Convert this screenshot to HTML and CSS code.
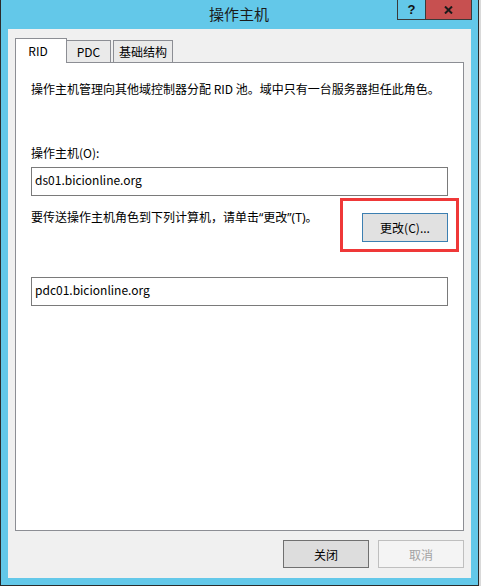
FILE: index.html
```html
<!DOCTYPE html>
<html>
<head>
    <meta charset="utf-8">
    <link rel="stylesheet" href="styles.css">
</head>
<body>
    <div class="window">
        <div class="titlebar">
            <div class="title">操作主机</div>
            <div class="caption-btns">
                <div class="cap-btn help-btn">?</div>
                <div class="cap-btn close-btn">
                    <svg width="9" height="8" viewBox="0 0 9 8">
                        <path d="M1 0.5 L8 7.5 M8 0.5 L1 7.5" stroke="#1a1a1a" stroke-width="2" fill="none"/>
                    </svg>
                </div>
            </div>
        </div>
        <div class="client">
            <div class="tabs">
                <div class="tab tab-active">RID</div>
                <div class="tab tab-pdc">PDC</div>
                <div class="tab tab-infra">基础结构</div>
            </div>
            <div class="tab-panel">
                <p class="intro">操作主机管理向其他域控制器分配 RID 池。域中只有一台服务器担任此角色。</p>
                <div class="label">操作主机(O):</div>
                <div class="textbox">ds01.bicionline.org</div>
                <div class="transfer-row">
                    <span class="transfer-text">要传送操作主机角色到下列计算机，请单击“更改”(T)。</span>
                    <button class="btn btn-change">更改(C)...</button>
                </div>
                <div class="textbox target">pdc01.bicionline.org</div>
                <div class="highlight"></div>
            </div>
            <div class="footer">
                <button class="btn btn-close">关闭</button>
                <button class="btn btn-cancel" disabled>取消</button>
            </div>
        </div>
    </div>
</body>
</html>
```

FILE: styles.css
```css
body {
    margin: 0;
    background: #d9d9d9;
    font-family: "Noto Sans CJK SC", "Noto Sans", sans-serif;
    font-size: 12px;
    color: #000;
}
.window {
    width: 479px;
    height: 586px;
    box-sizing: border-box;
    background: #63c8e9;
    border: 1px solid #2b2b2b;
    border-top: none;
    padding: 0 7px 7px;
}
.titlebar {
    position: relative;
    height: 29px;
}
.title {
    text-align: center;
    font-size: 15px;
    line-height: 28px;
    color: #1b1b1b;
    margin-left: -1px;
}
.caption-btns {
    position: absolute;
    top: 0;
    right: -1px;
    display: flex;
}
.cap-btn {
    height: 19px;
    border: 1px solid #3a3a3a;
    border-top: none;
    display: flex;
    align-items: center;
    justify-content: center;
}
.help-btn {
    width: 27px;
    border-right: none;
    font-weight: bold;
    font-size: 13px;
    font-family: "Liberation Sans", sans-serif;
    color: #111;
}
.close-btn {
    width: 45px;
    background: #c75050;
}
.client {
    height: 549px;
    box-sizing: border-box;
    background: #f0f0f0;
    padding: 9px 7px 0;
}
.tabs {
    position: relative;
    z-index: 1;
    display: flex;
    align-items: flex-end;
    height: 25px;
    margin-bottom: -1px;
}
.tab {
    box-sizing: border-box;
    border: 1px solid #8c8e94;
    border-bottom: none;
    background: #eaeaea;
    height: 22px;
    margin-bottom: 1px;
    padding-top: 3px;
    line-height: 16px;
    text-align: center;
}
.tab-active {
    width: 52px;
    height: 25px;
    margin-bottom: 0;
    background: #fff;
    padding-top: 4px;
    padding-right: 6px;
}
.tab-pdc {
    width: 44px;
    border-left: none;
}
.tab-infra {
    width: 60px;
    margin-left: 2px;
}
.tab-panel {
    position: relative;
    height: 469px;
    box-sizing: border-box;
    background: #fff;
    border: 1px solid #8c8e94;
    padding: 18px 15px 0;
}
.intro {
    margin: 0;
    line-height: 16px;
}
.label {
    margin-top: 48px;
    line-height: 16px;
}
.textbox {
    height: 29px;
    box-sizing: border-box;
    border: 1px solid #7a7a7a;
    margin-top: 6px;
    padding: 4px 3px 0;
    line-height: 16px;
}
.textbox.target {
    margin-top: 35px;
}
.transfer-row {
    display: flex;
    justify-content: space-between;
    align-items: flex-start;
    margin-top: 14px;
    line-height: 16px;
}
.transfer-text {
    font-family: "Noto Sans", "Noto Sans CJK SC", sans-serif;
}
.btn {
    font-family: inherit;
    font-size: 12px;
    color: #000;
    width: 86px;
    height: 28px;
    padding: 0;
    background: #dddddd;
    border: 1px solid #707070;
}
.btn-change {
    height: 29px;
    margin-top: 3px;
    border-color: #3c7fb1;
    background: #e1e1e1;
}
.highlight {
    position: absolute;
    left: 324px;
    top: 135px;
    width: 119px;
    height: 54px;
    box-sizing: border-box;
    border: 3px solid #ef3838;
}
.footer {
    display: flex;
    justify-content: flex-end;
    gap: 9px;
    margin-top: 9px;
}
.btn-cancel {
    background: #f4f4f4;
    border-color: #bfbfbf;
    color: #a3a3a3;
}
```
